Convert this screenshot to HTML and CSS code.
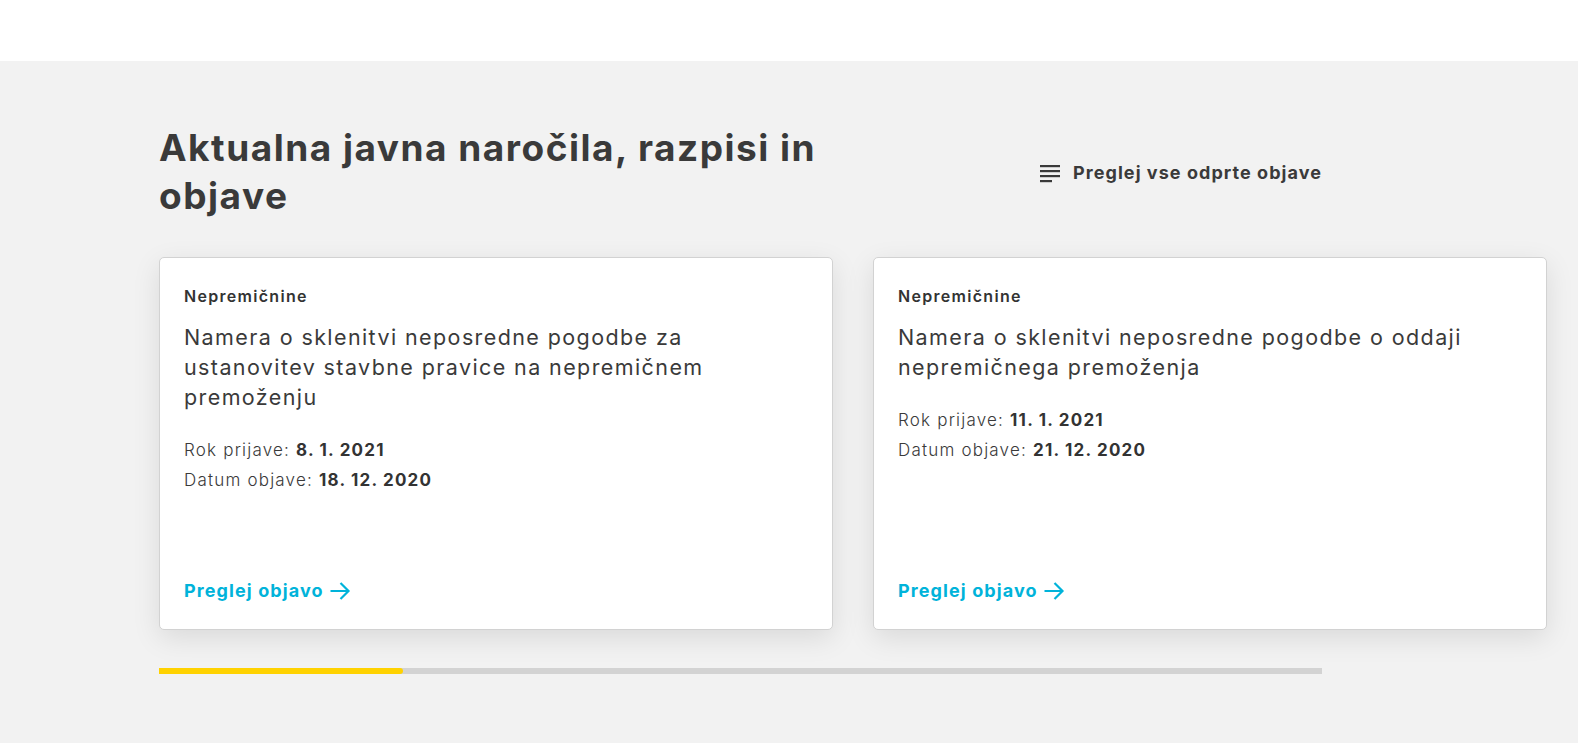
FILE: index.html
```html
<!DOCTYPE html>
<html lang="sl">
<head>
<meta charset="utf-8">
<title>Aktualna javna naročila</title>
<link rel="stylesheet" href="styles.css">
</head>
<body>
<header class="topbar"></header>
<main class="section">
  <div class="container">
    <div class="section-head">
      <h2 class="section-title">Aktualna javna naročila, razpisi in objave</h2>
      <a class="all-link" href="#">
        <svg class="all-icon" viewBox="0 0 20 18" width="20" height="18" aria-hidden="true">
          <rect x="0" y="0" width="20" height="2.2" fill="#3a3a3a"/>
          <rect x="0" y="5" width="20" height="2.2" fill="#3a3a3a"/>
          <rect x="0" y="10" width="20" height="2.2" fill="#3a3a3a"/>
          <rect x="0" y="15" width="12" height="2.2" fill="#3a3a3a"/>
        </svg>
        <span>Preglej vse odprte objave</span>
      </a>
    </div>
    <div class="track">
      <article class="card">
        <div class="card-cat">Nepremičnine</div>
        <h3 class="card-title">Namera o sklenitvi neposredne pogodbe za ustanovitev stavbne pravice na nepremičnem premoženju</h3>
        <div class="card-meta">
          <div>Rok prijave: <strong>8. 1. 2021</strong></div>
          <div>Datum objave: <strong>18. 12. 2020</strong></div>
        </div>
        <a class="card-link" href="#">Preglej objavo
          <svg class="arrow" viewBox="0 0 24 24" width="24" height="24" aria-hidden="true">
            <path d="M2.5 12h18M12.5 4L20.5 12l-8 8" fill="none" stroke="currentColor" stroke-width="2.2"/>
          </svg>
        </a>
      </article>
      <article class="card">
        <div class="card-cat">Nepremičnine</div>
        <h3 class="card-title">Namera o sklenitvi neposredne pogodbe o oddaji nepremičnega premoženja</h3>
        <div class="card-meta">
          <div>Rok prijave: <strong>11. 1. 2021</strong></div>
          <div>Datum objave: <strong>21. 12. 2020</strong></div>
        </div>
        <a class="card-link" href="#">Preglej objavo
          <svg class="arrow" viewBox="0 0 24 24" width="24" height="24" aria-hidden="true">
            <path d="M2.5 12h18M12.5 4L20.5 12l-8 8" fill="none" stroke="currentColor" stroke-width="2.2"/>
          </svg>
        </a>
      </article>
    </div>
    <div class="progress"><div class="progress-fill" style="width:21%"></div></div>
  </div>
</main>
</body>
</html>
```

FILE: styles.css
```css
* { box-sizing: border-box; }
html, body { margin: 0; padding: 0; }
body {
  font-family: Inter, "Open Sans", sans-serif;
  color: #3a3a3a;
  background: #f2f2f2;
  overflow: hidden;
  height: 743px;
}
.topbar {
  height: 61px;
  background: #fff;
}
.section {
  padding-top: 63px;
}
.container {
  margin-left: 159px;
  width: 1163px;
}
.section-head {
  display: flex;
  align-items: center;
  justify-content: space-between;
}
.section-title {
  margin: 0;
  width: 700px;
  font-size: 37px;
  line-height: 48px;
  font-weight: 700;
  letter-spacing: 1.5px;
  color: #3a3a3a;
}
.all-link {
  display: flex;
  align-items: center;
  gap: 13px;
  text-decoration: none;
  color: #3a3a3a;
  font-size: 18px;
  font-weight: 700;
  letter-spacing: 1.05px;
  margin-top: 1px;
}
.all-icon { width: 20px; height: 18px; margin-top: 2px; }
.track {
  display: flex;
  gap: 40px;
  margin-top: 37px;
}
.card {
  flex: 0 0 674px;
  height: 373px;
  background: #fff;
  border: 1px solid #d2d2d2;
  border-radius: 5px;
  box-shadow: 0 8px 28px rgba(0, 0, 0, 0.10);
  padding: 28px 24px 26px;
  display: flex;
  flex-direction: column;
}
.card-cat {
  font-size: 16px;
  line-height: 20px;
  font-weight: 600;
  letter-spacing: 1.3px;
  color: #333;
}
.card-title {
  margin: 16px 0 0;
  max-width: 590px;
  font-size: 21.5px;
  line-height: 30px;
  font-weight: 400;
  letter-spacing: 1.4px;
  color: #3a3a3a;
}
.card-meta {
  margin-top: 23px;
  font-size: 17px;
  line-height: 30px;
  font-weight: 300;
  letter-spacing: 1.2px;
  color: #3a3a3a;
}
.card-meta strong { font-weight: 700; color: #333; }
.card-link {
  margin-top: auto;
  display: inline-flex;
  align-items: center;
  gap: 4px;
  align-self: flex-start;
  color: #00b3da;
  text-decoration: none;
  font-size: 18px;
  line-height: 24px;
  font-weight: 700;
  letter-spacing: 1.1px;
}
.arrow { width: 24px; height: 24px; }
.progress {
  margin-top: 38px;
  height: 6px;
  background: #d3d3d3;
}
.progress-fill {
  height: 100%;
  background: #ffd200;
  border-radius: 0 3px 3px 0;
}
```
